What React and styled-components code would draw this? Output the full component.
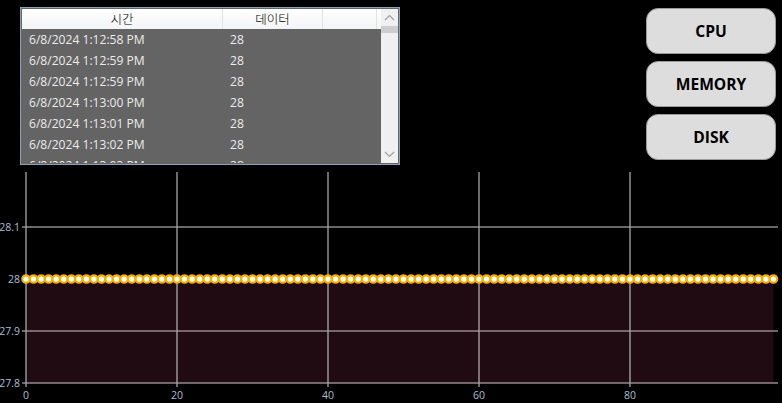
import React from 'react';
import styled, { createGlobalStyle } from 'styled-components';

const GlobalStyle = createGlobalStyle`
  html, body {
    margin: 0;
    padding: 0;
    background: #000;
  }
  body {
    font-family: "Open Sans", "Noto Sans", "Noto Sans CJK KR", sans-serif;
  }
`;

const rows = [
  '6/8/2024 1:12:58 PM',
  '6/8/2024 1:12:59 PM',
  '6/8/2024 1:12:59 PM',
  '6/8/2024 1:13:00 PM',
  '6/8/2024 1:13:01 PM',
  '6/8/2024 1:13:02 PM',
  '6/8/2024 1:13:03 PM',
];

// chart geometry (page pixels, chart svg starts at top 168)
const TOP = 168;
const X0 = 26;
const XSTEP = 7.55;
const yOf = (v) => 279 + (28 - v) * 520 - TOP;

const App = () => {
  const points = Array.from({ length: 100 }, (_, i) => X0 + i * XSTEP);
  const lastX = points[points.length - 1];

  return (
    <Page>
      <GlobalStyle />
      <TopRow>
        <ListBox>
          <ListInner>
            <Grid>
              <Header>
                <HeadCell $w={201}>시간</HeadCell>
                <HeadCell $w={100}>데이터</HeadCell>
                <HeadCell $w={54} />
              </Header>
              {rows.map((t, i) => (
                <Row key={i}>
                  <Cell $w={201}>{t}</Cell>
                  <Cell $w={100}>28</Cell>
                </Row>
              ))}
            </Grid>
            <ScrollBar>
              <Arrow>
                <svg width="11" height="7" viewBox="0 0 11 7">
                  <path d="M1 6 L5.5 1.5 L10 6" fill="none" stroke="#a0a0a0" strokeWidth="1.2" />
                </svg>
              </Arrow>
              <Thumb />
              <Track />
              <Arrow>
                <svg width="11" height="7" viewBox="0 0 11 7">
                  <path d="M1 1 L5.5 5.5 L10 1" fill="none" stroke="#a0a0a0" strokeWidth="1.2" />
                </svg>
              </Arrow>
            </ScrollBar>
          </ListInner>
        </ListBox>
        <Buttons>
          <Button>CPU</Button>
          <Button>MEMORY</Button>
          <Button>DISK</Button>
        </Buttons>
      </TopRow>

      <Chart width="782" height="235" viewBox="0 0 782 235">
        <rect x={X0} y={yOf(28)} width={lastX - X0} height={yOf(27.8) - yOf(28)} fill="#200b13" />
        {[0, 20, 40, 60, 80].map((v) => (
          <line key={v} x1={X0 + v * XSTEP} x2={X0 + v * XSTEP} y1={4} y2={219} stroke="#d8d8d8" strokeWidth="1" />
        ))}
        {[28.1, 28, 27.9, 27.8].map((v) => (
          <line key={v} x1={22} x2={778} y1={yOf(v)} y2={yOf(v)} stroke="#a8a0a4" strokeWidth="1.5" opacity="0.85" />
        ))}
        {[28.1, 28, 27.9, 27.8].map((v) => (
          <text key={v} x={20} y={yOf(v) + 3.5} textAnchor="end" fontSize="10.5" fill="#a9bed3" fontFamily="Open Sans, sans-serif">
            {v}
          </text>
        ))}
        {[0, 20, 40, 60, 80].map((v) => (
          <text key={v} x={X0 + v * XSTEP} y={231} textAnchor="middle" fontSize="10.5" fill="#a9bed3" fontFamily="Open Sans, sans-serif">
            {v}
          </text>
        ))}
        {points.map((x, i) => (
          <circle key={i} cx={x} cy={yOf(28)} r="3.7" fill="#fff" stroke="#f7b000" strokeWidth="2.2" />
        ))}
      </Chart>
    </Page>
  );
};

export default App;

const Page = styled.div`
  width: 782px;
  height: 403px;
  background: #000;
  overflow: hidden;
  display: flex;
  flex-direction: column;
`;

const TopRow = styled.div`
  display: flex;
  justify-content: space-between;
  align-items: flex-start;
  height: 168px;
  padding: 7px 6px 0 20px;
  box-sizing: border-box;
`;

const ListBox = styled.div`
  width: 380px;
  height: 158px;
  box-sizing: border-box;
  border: 1px solid #8aa2b8;
  background: #646464;
  padding: 1px;
`;

const ListInner = styled.div`
  display: flex;
  height: 100%;
  overflow: hidden;
`;

const Grid = styled.div`
  flex: 1;
  overflow: hidden;
`;

const Header = styled.div`
  display: flex;
  height: 20px;
  background: linear-gradient(#ffffff, #f3f4f6);
`;

const HeadCell = styled.div`
  width: ${(p) => p.$w}px;
  box-sizing: border-box;
  border-right: 1px solid #e2e2e2;
  font-size: 12.5px;
  line-height: 20px;
  color: #000;
  text-align: center;
  font-family: "Noto Sans CJK KR", "Open Sans", sans-serif;
  font-weight: 300;
`;

const Row = styled.div`
  display: flex;
  height: 21px;
  align-items: center;
`;

const Cell = styled.div`
  width: ${(p) => p.$w}px;
  padding-left: 7px;
  box-sizing: border-box;
  font-size: 12.1px;
  color: #ececec;
  white-space: nowrap;
`;

const ScrollBar = styled.div`
  width: 17px;
  background: #f0f0f0;
  display: flex;
  flex-direction: column;
`;

const Arrow = styled.div`
  height: 17px;
  display: flex;
  align-items: center;
  justify-content: center;
`;

const Thumb = styled.div`
  height: 7px;
  background: #cdcdcd;
`;

const Track = styled.div`
  flex: 1;
`;

const Buttons = styled.div`
  display: flex;
  flex-direction: column;
  gap: 7px;
  margin-top: 1px;
`;

const Button = styled.button`
  width: 130px;
  height: 46px;
  border: 1px solid #9a9a9a;
  border-radius: 12px;
  background: #dddddd;
  font-family: "Open Sans", sans-serif;
  font-weight: 700;
  font-size: 15.6px;
  color: #000;
  padding: 0;
`;

const Chart = styled.svg`
  display: block;
`;
